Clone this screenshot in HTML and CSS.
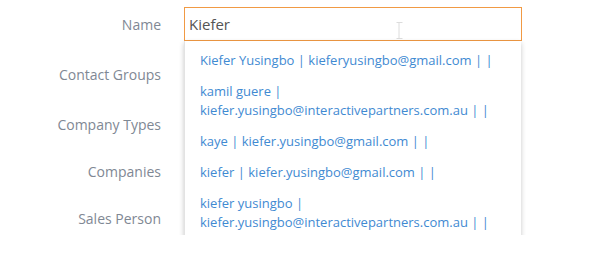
FILE: index.html
```html
<!DOCTYPE html>
<html>
<head>
<meta charset="utf-8">
<link rel="stylesheet" href="styles.css">
</head>
<body>
<form class="form">
  <div class="row">
    <label class="label">Name</label>
    <div class="field">
      <div class="input">Kiefer</div>
      <svg class="ibeam" width="7" height="17" viewBox="0 0 7 17"><path d="M0.5 0.5h2.5v16h-2.5M6.5 0.5h-3.5M6.5 16.5h-3.5" fill="none" stroke="#dcdcdc" stroke-width="1"/></svg>
      <ul class="dropdown">
        <li class="item">Kiefer Yusingbo | kieferyusingbo@gmail.com | |</li>
        <li class="item">kamil guere | kiefer.yusingbo@interactivepartners.com.au | |</li>
        <li class="item">kaye | kiefer.yusingbo@gmail.com | |</li>
        <li class="item">kiefer | kiefer.yusingbo@gmail.com | |</li>
        <li class="item">kiefer yusingbo | kiefer.yusingbo@interactivepartners.com.au | |</li>
      </ul>
    </div>
  </div>
  <div class="row"><label class="label">Contact Groups</label><div class="field"></div></div>
  <div class="row"><label class="label">Company Types</label><div class="field"></div></div>
  <div class="row tight"><label class="label">Companies</label><div class="field"></div></div>
  <div class="row tight"><label class="label">Sales Person</label><div class="field"></div></div>
</form>
</body>
</html>
```
FILE: styles.css
```css
html, body {
  margin: 0;
  padding: 0;
  background: #fff;
}
body {
  font-family: "Open Sans", "Liberation Sans", sans-serif;
}
.form {
  display: flex;
  flex-direction: column;
  gap: 16px;
  padding-top: 7px;
}
.row {
  display: grid;
  grid-template-columns: 161px 338px;
  column-gap: 23px;
  height: 34px;
  align-items: center;
}
.row.tight {
  margin-top: -3px;
}
.label {
  text-align: right;
  font-size: 14px;
  color: #7f8894;
}
.field {
  position: relative;
  height: 34px;
}
.input {
  box-sizing: border-box;
  height: 34px;
  border: 1px solid #f19a44;
  padding: 0 4px;
  font-size: 15px;
  line-height: 32px;
  color: #555;
}
.ibeam {
  position: absolute;
  left: 212px;
  top: 15px;
}
.dropdown {
  position: absolute;
  top: 34px;
  left: 0;
  width: 337px;
  box-sizing: border-box;
  margin: 0;
  padding: 4px 0;
  list-style: none;
  background: #fff;
  border-left: 1px solid #e3e3e3;
  box-shadow: 0 2px 5px rgba(0,0,0,0.22);
  z-index: 2;
}
.item {
  padding: 6px 15px;
  font-size: 13px;
  line-height: 19px;
  color: #3f8ad2;
}
```
